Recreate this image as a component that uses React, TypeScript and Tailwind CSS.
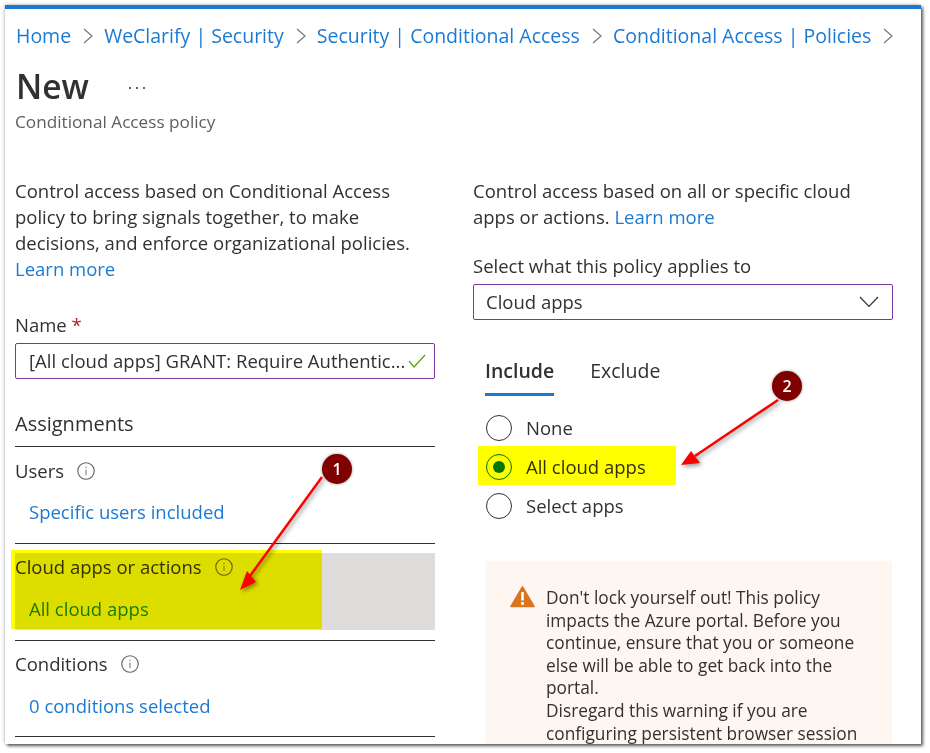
import React from 'react';

const fontStack = { fontFamily: '"Open Sans", "Noto Sans", sans-serif' };

const crumbs = ['Home', 'WeClarify | Security', 'Security | Conditional Access', 'Conditional Access | Policies'];

const Chevron = () => (
  <svg width="10" height="16" viewBox="0 0 10 16" className="mr-[11px] ml-[12px] shrink-0">
    <polyline points="1,1 9,8 1,15" fill="none" stroke="#7a7876" strokeWidth="1.2" />
  </svg>
);

const InfoIcon = () => (
  <svg width="18" height="18" viewBox="0 0 18 18" className="ml-[13px] shrink-0">
    <circle cx="9" cy="9" r="8.2" fill="none" stroke="#605e5c" strokeWidth="1.1" />
    <rect x="8.4" y="7.6" width="1.2" height="5.6" fill="#8a8886" />
    <rect x="8.4" y="4.8" width="1.2" height="1.3" fill="#8a8886" />
  </svg>
);

const Radio = ({ checked }: { checked?: boolean }) => (
  <span className={`flex h-[26px] w-[26px] shrink-0 items-center justify-center rounded-full border ${checked ? 'border-[#0078d4]' : 'border-[#323130]'}`}>
    {checked && <span className="h-[12px] w-[12px] rounded-full bg-[#0078d4]" />}
  </span>
);

const AssignmentRow = ({ label, value, active, last }: { label: string; value: string; active?: boolean; last?: boolean }) => (
  <div className="border-b border-[#323130]">
    <div className={active ? 'mt-[9px] mb-[10px] h-[77px] bg-[#dedddc]' : last ? 'h-[95px]' : 'h-[96px]'}>
      <div className={`flex items-center text-[18.5px] leading-[26px] ${active ? 'pt-[1px]' : last ? 'pt-[10px]' : 'pt-[11px]'}`}>
        {label}
        <InfoIcon />
      </div>
      <div className={`pl-[14px] text-[18.5px] leading-[26px] text-[#1b7ad4] ${active ? 'mt-[16px]' : last ? 'mt-[16px]' : 'mt-[15px]'}`}>{value}</div>
    </div>
  </div>
);

const Badge = ({ n, className }: { n: number; className: string }) => (
  <div className={`absolute flex h-[30px] w-[30px] items-center justify-center rounded-full bg-[#800000] text-[16px] font-semibold text-white shadow-[0_0_3px_rgba(0,0,0,0.45)] ${className}`}>
    {n}
  </div>
);

export default function App() {
  return (
    <div className="relative h-[753px] w-[930px] overflow-hidden bg-white pt-[5px] pl-[5px] text-[#323130]" style={fontStack}>
      <div className="h-[739px] w-[916px] overflow-hidden border-t-4 border-[#1b78d0] bg-white pl-[10px] shadow-[2px_2px_3px_rgba(0,0,0,0.65),-1px_-1px_3px_rgba(0,0,0,0.2)]">
        <nav className="flex h-[54px] items-center pl-[1px] text-[19.5px] whitespace-nowrap text-[#1b7ad4]">
          {crumbs.map((c) => (
            <React.Fragment key={c}>
              <span>{c}</span>
              <Chevron />
            </React.Fragment>
          ))}
        </nav>

        <div className="flex h-[48px] items-center pl-[1px]">
          <h1 className="text-[33.5px] leading-none font-semibold">New</h1>
          <div className="ml-[40px] flex gap-[5px] pt-[1px]">
            <span className="h-[2px] w-[2px] rounded-full bg-[#323130]" />
            <span className="h-[2px] w-[2px] rounded-full bg-[#323130]" />
            <span className="h-[2px] w-[2px] rounded-full bg-[#323130]" />
          </div>
        </div>
        <div className="text-[17.2px] leading-[22px] text-[#605e5c]">Conditional Access policy</div>

        <div className="mt-[45px] grid grid-cols-[420px_420px] gap-x-[38px]">
          <div>
            <p className="text-[18.5px] leading-[26px] whitespace-nowrap">
              Control access based on Conditional Access
              <br />
              policy to bring signals together, to make
              <br />
              decisions, and enforce organizational policies.
              <br />
              <span className="text-[#1b7ad4]">Learn more</span>
            </p>
            <div className="mt-[30px] text-[18.5px] leading-[26px]">
              Name <span className="text-[#a4262c]">*</span>
            </div>
            <div className="mt-[5px] flex h-[36px] items-center justify-between rounded-[2px] border border-[#7f35a0] pr-[8px] pl-[13px]">
              <span className="text-[18.5px] whitespace-nowrap">[All cloud apps] GRANT: Require Authentic...</span>
              <svg width="18" height="14" viewBox="0 0 18 14" className="shrink-0">
                <polyline points="1,7 6,13 17,1" fill="none" stroke="#57a300" strokeWidth="1.2" />
              </svg>
            </div>
            <div className="mt-[31px] border-b border-[#323130] pb-[8px] text-[20px] leading-[28px]">Assignments</div>
            <AssignmentRow label="Users" value="Specific users included" />
            <AssignmentRow label="Cloud apps or actions" value="All cloud apps" active />
            <AssignmentRow label="Conditions" value="0 conditions selected" last />
          </div>

          <div>
            <p className="text-[18.5px] leading-[26px] whitespace-nowrap">
              Control access based on all or specific cloud
              <br />
              apps or actions. <span className="text-[#1b7ad4]">Learn more</span>
            </p>
            <div className="mt-[23px] text-[18.5px] leading-[26px]">Select what this policy applies to</div>
            <div className="mt-[5px] flex h-[36px] items-center justify-between rounded-[2px] border border-[#7f35a0] pr-[13px] pl-[12px]">
              <span className="text-[18.5px]">Cloud apps</span>
              <svg width="20" height="12" viewBox="0 0 20 12">
                <polyline points="1,1 10,10.5 19,1" fill="none" stroke="#323130" strokeWidth="1.2" />
              </svg>
            </div>

            <div className="mt-[37px] flex pl-[12px] text-[19.5px]">
              <div className="border-b-[3px] border-[#1b78d0] pb-[8px] leading-[28px] font-semibold">Include</div>
              <div className="ml-[36px] leading-[28px]">Exclude</div>
            </div>

            <div className="mt-[19px] flex flex-col gap-[13px] pl-[13px] text-[18.5px]">
              <label className="flex items-center gap-[14px] leading-[26px]"><Radio />None</label>
              <label className="flex items-center gap-[14px] leading-[26px]"><Radio checked />All cloud apps</label>
              <label className="flex items-center gap-[14px] leading-[26px]"><Radio />Select apps</label>
            </div>

            <div className="mt-[42px] ml-[12px] flex h-[300px] w-[407px] rounded-[2px] bg-[#fef6f0] pt-[26px] pl-[25px]">
              <svg width="25" height="22" viewBox="0 0 25 22" className="mt-[-1px] shrink-0">
                <path d="M12.5 1 L24 20.5 H1 Z" fill="#d9741f" stroke="#d9741f" strokeWidth="1.6" strokeLinejoin="round" />
                <rect x="11.2" y="6" width="2.6" height="8.5" fill="#fff" />
                <rect x="11.2" y="16" width="2.6" height="2.8" fill="#fff" />
              </svg>
              <p className="ml-[11px] text-[17.3px] leading-[22.6px] whitespace-nowrap">
                Don't lock yourself out! This policy
                <br />
                impacts the Azure portal. Before you
                <br />
                continue, ensure that you or someone
                <br />
                else will be able to get back into the
                <br />
                portal.
                <br />
                Disregard this warning if you are
                <br />
                configuring persistent browser session
              </p>
            </div>
          </div>
        </div>
      </div>

      {/* annotations drawn over the screenshot */}
      <div className="absolute top-[550px] left-[11px] h-[79px] w-[311px] bg-[#ffff00] mix-blend-multiply" />
      <div className="absolute top-[446px] left-[478px] h-[39px] w-[198px] bg-[#ffff00] mix-blend-multiply" />
      <svg width="930" height="753" viewBox="0 0 930 753" className="pointer-events-none absolute top-0 left-0 drop-shadow-[2px_2px_2px_rgba(0,0,0,0.4)]">
        <line x1="322" y1="477" x2="250" y2="576" stroke="#ff0000" strokeWidth="2.5" />
        <polygon points="240,590 247,571 256,582" fill="#ff0000" />
        <line x1="778" y1="400" x2="695" y2="456" stroke="#ff0000" strokeWidth="2.5" />
        <polygon points="681,465 691,451 700,463" fill="#ff0000" />
      </svg>
      <Badge n={1} className="top-[454px] left-[322px]" />
      <Badge n={2} className="top-[371px] left-[772px]" />
    </div>
  );
}
